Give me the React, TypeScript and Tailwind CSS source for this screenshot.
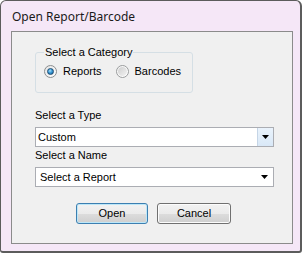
import React from "react";

function Radio({ checked }: { checked: boolean }) {
  return checked ? (
    <span className="flex h-[13px] w-[13px] items-center justify-center rounded-full border border-[#8c8e8f] bg-[linear-gradient(135deg,#e4e4e4,#ffffff)]">
      <span className="h-[7px] w-[7px] rounded-full border border-[#1c4c73] bg-[radial-gradient(circle_at_40%_35%,#a8e2fb_0%,#3b9ad6_45%,#145b93_100%)]" />
    </span>
  ) : (
    <span className="flex h-[13px] w-[13px] items-center justify-center rounded-full border border-[#9a9c9d] bg-[linear-gradient(135deg,#f4f4f4,#ffffff)]">
      <span className="h-[9px] w-[9px] rounded-full bg-[linear-gradient(135deg,#cfcfcf,#f2f2f2)]" />
    </span>
  );
}

function Arrow() {
  return (
    <svg width="7" height="4" viewBox="0 0 7 4">
      <polygon points="0,0 7,0 3.5,4" fill="#000" />
    </svg>
  );
}

export default function App() {
  return (
    <div
      className="h-[254px] w-[304px] bg-white text-[11px] text-black"
      style={{ fontFamily: '"Liberation Sans", Arial, sans-serif' }}
    >
      <div className="flex h-[253px] w-[302px] flex-col rounded-t-[6px] rounded-b-[3px] border-l border-t border-b-2 border-r-2 border-[#5c5c5c] bg-[#f5e7f7]">
        <div
          className="flex h-[30px] items-center pl-[11px] pt-[2px] text-[12px] text-[#1a1a1a]"
          style={{ fontFamily: '"Noto Sans", "Open Sans", sans-serif' }}
        >
          Open Report/Barcode
        </div>
        <div className="ml-[10px] flex h-[213px] w-[282px] flex-col border border-[#8b8b8b] bg-[#f0f0f0] pl-[23px]">
          <fieldset className="mt-[14px] w-[158px] rounded-[3px] border border-[#d5dfe5] pb-[14px] pl-[8px] pt-[6px]">
            <legend className="px-[1px] leading-[13px]">Select a Category</legend>
            <div className="flex h-[13px] items-center">
              <Radio checked />
              <span className="ml-[6px] leading-[13px]">Reports</span>
              <span className="ml-[14px]">
                <Radio checked={false} />
              </span>
              <span className="ml-[6px] leading-[13px]">Barcodes</span>
            </div>
          </fieldset>
          <div className="mt-[16px] leading-[13px]">Select a Type</div>
          <div className="mt-[5px] flex h-[20px] w-[239px] items-center border border-[#abadb3] bg-white">
            <span className="flex-1 pl-[2px] leading-[13px]">Custom</span>
            <span className="flex h-[18px] w-[16px] items-center justify-center border-l border-[#c5d5e6] bg-[linear-gradient(#eaf3fc,#d9e8f7)]">
              <Arrow />
            </span>
          </div>
          <div className="mt-[2px] leading-[13px]">Select a Name</div>
          <div className="mt-[5px] flex h-[20px] w-[239px] items-center border border-[#abadb3] bg-white">
            <span className="flex-1 pl-[4px] leading-[13px]">Select a Report</span>
            <span className="mr-[5px] flex items-center">
              <Arrow />
            </span>
          </div>
          <div className="ml-[41px] mt-[16px] flex gap-[9px]">
            <div className="flex h-[21px] w-[72px] items-center justify-center rounded-[3px] border border-[#3c7fb1] bg-[linear-gradient(#f2f2f2_0%,#ebebeb_50%,#dddddd_51%,#cfcfcf_100%)] shadow-[inset_0_0_0_1px_#bde7f8]">
              Open
            </div>
            <div className="flex h-[21px] w-[74px] items-center justify-center rounded-[3px] border border-[#707070] bg-[linear-gradient(#f2f2f2_0%,#ebebeb_50%,#dddddd_51%,#cfcfcf_100%)] shadow-[inset_0_0_0_1px_#fcfcfc]">
              Cancel
            </div>
          </div>
        </div>
      </div>
    </div>
  );
}
